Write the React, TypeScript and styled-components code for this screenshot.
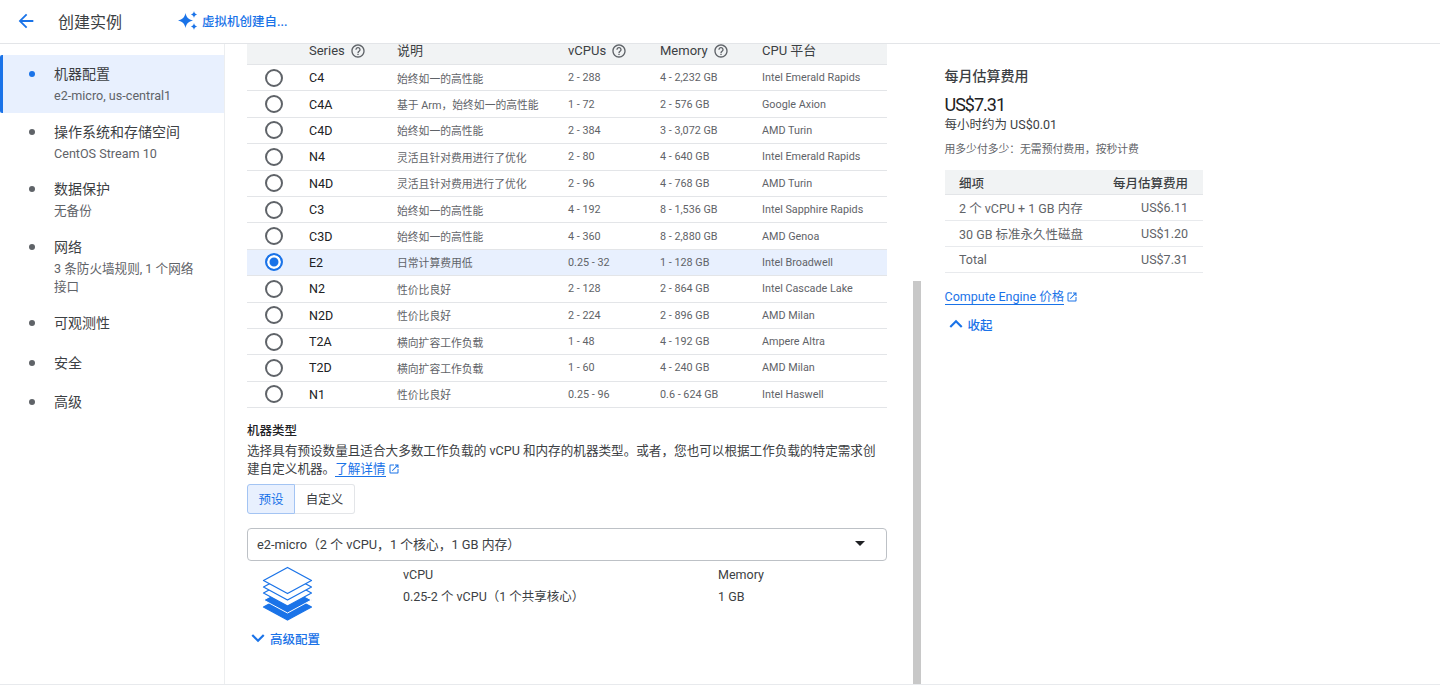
import styled, { createGlobalStyle } from "styled-components";
import {
  MdArrowBack,
  MdHelpOutline,
  MdOpenInNew,
  MdKeyboardArrowDown,
  MdKeyboardArrowUp,
  MdArrowDropDown,
} from "react-icons/md";

const FONT = `Roboto, "Noto Sans CJK SC", sans-serif`;

const SERIES = [
  { name: "C4", desc: "始终如一的高性能", cpu: "2 - 288", mem: "4 - 2,232 GB", platform: "Intel Emerald Rapids" },
  { name: "C4A", desc: "基于 Arm，始终如一的高性能", cpu: "1 - 72", mem: "2 - 576 GB", platform: "Google Axion" },
  { name: "C4D", desc: "始终如一的高性能", cpu: "2 - 384", mem: "3 - 3,072 GB", platform: "AMD Turin" },
  { name: "N4", desc: "灵活且针对费用进行了优化", cpu: "2 - 80", mem: "4 - 640 GB", platform: "Intel Emerald Rapids" },
  { name: "N4D", desc: "灵活且针对费用进行了优化", cpu: "2 - 96", mem: "4 - 768 GB", platform: "AMD Turin" },
  { name: "C3", desc: "始终如一的高性能", cpu: "4 - 192", mem: "8 - 1,536 GB", platform: "Intel Sapphire Rapids" },
  { name: "C3D", desc: "始终如一的高性能", cpu: "4 - 360", mem: "8 - 2,880 GB", platform: "AMD Genoa" },
  { name: "E2", desc: "日常计算费用低", cpu: "0.25 - 32", mem: "1 - 128 GB", platform: "Intel Broadwell", selected: true },
  { name: "N2", desc: "性价比良好", cpu: "2 - 128", mem: "2 - 864 GB", platform: "Intel Cascade Lake" },
  { name: "N2D", desc: "性价比良好", cpu: "2 - 224", mem: "2 - 896 GB", platform: "AMD Milan" },
  { name: "T2A", desc: "横向扩容工作负载", cpu: "1 - 48", mem: "4 - 192 GB", platform: "Ampere Altra" },
  { name: "T2D", desc: "横向扩容工作负载", cpu: "1 - 60", mem: "4 - 240 GB", platform: "AMD Milan" },
  { name: "N1", desc: "性价比良好", cpu: "0.25 - 96", mem: "0.6 - 624 GB", platform: "Intel Haswell" },
];

const NAV = [
  { title: "机器配置", sub: ["e2-micro, us-central1"], active: true },
  { title: "操作系统和存储空间", sub: ["CentOS Stream 10"] },
  { title: "数据保护", sub: ["无备份"] },
  { title: "网络", sub: ["3 条防火墙规则, 1 个网络", "接口"] },
  { title: "可观测性", sub: [] },
  { title: "安全", sub: [] },
  { title: "高级", sub: [] },
];

const COSTS = [
  { label: "2 个 vCPU + 1 GB 内存", value: "US$6.11" },
  { label: "30 GB 标准永久性磁盘", value: "US$1.20" },
  { label: "Total", value: "US$7.31" },
];

const Sparkle = () => (
  <svg width="21" height="21" viewBox="0 0 21 21" fill="#1a73e8">
    <path d="M7.500 3 C8.300 7 10.500 9.700 15 10.500 C10.500 11.300 8.300 14 7.500 18 C6.700 14 4.500 11.300 0 10.500 C4.500 9.700 6.700 7 7.500 3Z" />
    <path d="M16 1 C16.300 3 17.200 4 19.200 4.500 C17.200 5 16.300 6 16 8 C15.700 6 14.800 5 12.800 4.500 C14.800 4 15.700 3 16 1Z" />
    <path d="M16 13 C16.300 15 17.200 16 19.200 16.500 C17.200 17 16.300 18 16 20 C15.700 18 14.800 17 12.800 16.500 C14.800 16 15.700 15 16 13Z" />
  </svg>
);

const StackIcon = () => (
  <svg width="52" height="56" viewBox="0 0 52 56" strokeLinejoin="round">
    <path d="M25.500 28 L49.500 41 L25.500 54 L1.500 41Z" fill="#1a73e8" stroke="#1a73e8" strokeWidth="1.300" />
    <path d="M25.500 21 L49.500 34 L25.500 47 L1.500 34Z" fill="#1a73e8" stroke="#fff" strokeWidth="1" />
    <path d="M25.500 14 L49.500 27 L25.500 40 L1.500 27Z" fill="#fff" stroke="#1a73e8" strokeWidth="1.300" />
    <path d="M25.500 8 L49.500 21 L25.500 34 L1.500 21Z" fill="#fff" stroke="#1a73e8" strokeWidth="1.300" />
    <path d="M25.500 1.500 L49.500 14.500 L25.500 27.500 L1.500 14.500Z" fill="#fff" stroke="#1a73e8" strokeWidth="1.300" />
  </svg>
);

const App = () => {
  return (
    <>
      <GlobalStyle />
      <Page>
        <Header>
          <BackButton>
            <MdArrowBack size={22} />
          </BackButton>
          <PageTitle>创建实例</PageTitle>
          <AssistButton>
            <Sparkle />
            <span>虚拟机创建自...</span>
          </AssistButton>
        </Header>
        <Body>
          <Sidebar>
            {NAV.map((item) => (
              <NavItem key={item.title} $active={item.active} $plain={item.sub.length === 0}>
                <NavDot $active={item.active} />
                <NavText>
                  <NavTitle>{item.title}</NavTitle>
                  {item.sub.map((line) => (
                    <NavSub key={line}>{line}</NavSub>
                  ))}
                </NavText>
              </NavItem>
            ))}
          </Sidebar>
          <Main>
            <Content>
              <TableHead>
                <span />
                <HeadCell>Series <MdHelpOutline size={16} /></HeadCell>
                <HeadCell>说明</HeadCell>
                <HeadCell>vCPUs <MdHelpOutline size={16} /></HeadCell>
                <HeadCell>Memory <MdHelpOutline size={16} /></HeadCell>
                <HeadCell>CPU 平台</HeadCell>
              </TableHead>
              {SERIES.map((row) => (
                <TableRow key={row.name} $selected={row.selected}>
                  <Radio $checked={row.selected} />
                  <SeriesName>{row.name}</SeriesName>
                  <Cell>{row.desc}</Cell>
                  <Cell>{row.cpu}</Cell>
                  <Cell>{row.mem}</Cell>
                  <Cell>{row.platform}</Cell>
                </TableRow>
              ))}
              <SectionTitle>机器类型</SectionTitle>
              <Description>
                选择具有预设数量且适合大多数工作负载的 vCPU 和内存的机器类型。或者，您也可以根据工作负载的特定需求创建自定义机器。
                <Link>了解详情</Link>
                <OutIcon><MdOpenInNew size={12} /></OutIcon>
              </Description>
              <Toggle>
                <ToggleButton $on>预设</ToggleButton>
                <ToggleButton>自定义</ToggleButton>
              </Toggle>
              <Select>
                <span>e2-micro（2 个 vCPU，1 个核心，1 GB 内存）</span>
                <MdArrowDropDown size={24} color="#202124" />
              </Select>
              <Specs>
                <SpecIcon><StackIcon /></SpecIcon>
                <SpecColumn $width={315}>
                  <SpecLabel>vCPU</SpecLabel>
                  <SpecValue>0.25-2 个 vCPU（1 个共享核心）</SpecValue>
                </SpecColumn>
                <SpecColumn>
                  <SpecLabel>Memory</SpecLabel>
                  <SpecValue>1 GB</SpecValue>
                </SpecColumn>
              </Specs>
              <AdvancedToggle>
                <MdKeyboardArrowDown size={26} />
                高级配置
              </AdvancedToggle>
            </Content>
            <ScrollTrack>
              <ScrollThumb />
            </ScrollTrack>
          </Main>
          <Aside>
            <AsideTitle>每月估算费用</AsideTitle>
            <Price>US$7.31</Price>
            <Hourly>每小时约为 US$0.01</Hourly>
            <Note>用多少付多少：无需预付费用，按秒计费</Note>
            <CostHead>
              <span>细项</span>
              <span>每月估算费用</span>
            </CostHead>
            {COSTS.map((cost) => (
              <CostRow key={cost.label}>
                <span>{cost.label}</span>
                <span>{cost.value}</span>
              </CostRow>
            ))}
            <PriceLinkRow>
              <Link>Compute Engine 价格</Link>
              <OutIcon><MdOpenInNew size={12} /></OutIcon>
            </PriceLinkRow>
            <CollapseToggle>
              <MdKeyboardArrowUp size={26} />
              收起
            </CollapseToggle>
          </Aside>
        </Body>
      </Page>
    </>
  );
};

export default App;

const GlobalStyle = createGlobalStyle`
  html, body {
    margin: 0;
    padding: 0;
    background: #fff;
    overflow: hidden;
  }
  * {
    box-sizing: border-box;
  }
  body {
    font-family: ${FONT};
    color: #202124;
  }
`;

const Page = styled.div`
  width: 1440px;
  height: 685px;
  display: flex;
  flex-direction: column;
  border-bottom: 1px solid #e8eaed;
`;

const Header = styled.header`
  height: 44px;
  flex: none;
  display: flex;
  align-items: center;
  padding: 0 0 2px 15px;
  border-bottom: 1px solid #e3e5e8;
`;

const BackButton = styled.div`
  display: flex;
  color: #1a73e8;
  width: 43px;
`;

const PageTitle = styled.h1`
  margin: 0;
  width: 120px;
  font-size: 16px;
  font-weight: 400;
  color: #3c4043;
`;

const AssistButton = styled.div`
  display: flex;
  align-items: center;
  gap: 3px;
  font-size: 12.5px;
  font-weight: 500;
  color: #1a73e8;
`;

const Body = styled.div`
  flex: 1;
  min-height: 0;
  display: flex;
`;

const Sidebar = styled.nav`
  width: 225px;
  flex: none;
  padding-top: 11px;
  border-right: 1px solid #eceef0;
`;

const NavItem = styled.div<{ $active?: boolean; $plain?: boolean }>`
  display: flex;
  padding: ${(p) => (p.$plain ? "10px 0 9.5px" : "9px 0 7.5px")};
  padding-left: ${(p) => (p.$active ? "26px" : "29px")};
  background: ${(p) => (p.$active ? "#e8f0fe" : "transparent")};
  border-left: ${(p) => (p.$active ? "3px solid #1a73e8" : "none")};
  border-radius: 2px 0 0 2px;
`;

const NavDot = styled.span<{ $active?: boolean }>`
  width: 6px;
  height: 6px;
  margin-top: 7px;
  flex: none;
  border-radius: 50%;
  background: ${(p) => (p.$active ? "#1a73e8" : "#5f6368")};
`;

const NavText = styled.div`
  margin-left: 19px;
  width: 148px;
`;

const NavTitle = styled.div`
  font-size: 14px;
  line-height: 20px;
  color: #3c4043;
  white-space: nowrap;
`;

const NavSub = styled.div`
  font-size: 12.600px;
  line-height: 18px;
  color: #5f6368;
  white-space: nowrap;
  &:nth-child(2) {
    margin-top: 3px;
  }
`;

const Main = styled.main`
  width: 696px;
  flex: none;
  display: flex;
  justify-content: space-between;
  padding-left: 22px;
`;

const Content = styled.div`
  width: 640px;
`;

const COLUMNS = "62px 88px 171px 92px 102px 1fr";

const TableHead = styled.div`
  height: 21px;
  display: grid;
  grid-template-columns: ${COLUMNS};
  align-content: start;
  background: #f1f3f4;
  border-bottom: 1px solid #e3e5e8;
`;

const HeadCell = styled.div`
  display: flex;
  align-items: center;
  gap: 5px;
  height: 14px;
  font-size: 13px;
  line-height: 14px;
  color: #3c4043;
  svg {
    color: #5f6368;
  }
`;

const TableRow = styled.div<{ $selected?: boolean }>`
  height: 26.400px;
  display: grid;
  grid-template-columns: ${COLUMNS};
  align-items: center;
  background: ${(p) => (p.$selected ? "#e8f0fe" : "#fff")};
  border-bottom: 1px solid #e3e5e8;
`;

const Radio = styled.span<{ $checked?: boolean }>`
  width: 18px;
  height: 18px;
  margin-left: 18px;
  border-radius: 50%;
  border: 2px solid ${(p) => (p.$checked ? "#1a73e8" : "#5f6368")};
  background: ${(p) => (p.$checked ? "#1a73e8" : "#fff")};
  box-shadow: ${(p) => (p.$checked ? "inset 0 0 0 2.500px #fff" : "none")};
`;

const SeriesName = styled.div`
  font-size: 12.500px;
  color: #202124;
`;

const Cell = styled.div`
  font-size: 10.800px;
  color: #5f6368;
  white-space: nowrap;
`;

const SectionTitle = styled.div`
  margin-top: 13.500px;
  font-size: 12.500px;
  line-height: 18px;
  font-weight: 500;
  color: #202124;
`;

const Description = styled.div`
  margin-top: 2px;
  font-size: 12.600px;
  line-height: 18px;
  color: #3c4043;
`;

const Link = styled.span`
  color: #1a73e8;
  border-bottom: 1px solid #1a73e8;
`;

const OutIcon = styled.span`
  display: inline-flex;
  margin-left: 2px;
  vertical-align: -2px;
  color: #1a73e8;
`;

const Toggle = styled.div`
  margin-top: 6px;
  display: flex;
`;

const ToggleButton = styled.div<{ $on?: boolean }>`
  height: 30px;
  width: ${(p) => (p.$on ? "48px" : "60px")};
  display: flex;
  align-items: center;
  justify-content: center;
  font-size: 12.500px;
  color: ${(p) => (p.$on ? "#1a73e8" : "#3c4043")};
  background: ${(p) => (p.$on ? "#e8f0fe" : "#fff")};
  border: 1px solid ${(p) => (p.$on ? "#a3c4f3" : "#e3e5e8")};
  border-radius: ${(p) => (p.$on ? "3px 0 0 3px" : "0 3px 3px 0")};
  ${(p) => !p.$on && "border-left: none;"}
`;

const Select = styled.div`
  height: 32.500px;
  margin-top: 14.500px;
  padding: 0 14px 2px 9px;
  display: flex;
  align-items: center;
  justify-content: space-between;
  font-size: 12.800px;
  color: #3c4043;
  border: 1px solid #bdc1c6;
  border-radius: 4px;
`;

const Specs = styled.div`
  display: flex;
  margin-top: 5px;
  height: 56px;
`;

const SpecIcon = styled.div`
  width: 156px;
  padding-left: 15px;
`;

const SpecColumn = styled.div<{ $width?: number }>`
  width: ${(p) => (p.$width ? `${p.$width}px` : "auto")};
`;

const SpecLabel = styled.div`
  font-size: 12.500px;
  line-height: 18px;
  color: #3c4043;
`;

const SpecValue = styled.div`
  margin-top: 4px;
  font-size: 12.500px;
  line-height: 18px;
  color: #3c4043;
`;

const AdvancedToggle = styled.div`
  display: flex;
  align-items: center;
  margin-top: 3.500px;
  font-size: 12.500px;
  font-weight: 500;
  color: #1a73e8;
  svg {
    margin: 0 -1px 0 -2px;
  }
`;

const ScrollTrack = styled.div`
  width: 8px;
  display: flex;
  flex-direction: column;
  justify-content: flex-end;
`;

const ScrollThumb = styled.div`
  height: 403px;
  background: #c8c8c8;
`;

const Aside = styled.aside`
  width: 282px;
  padding: 23px 0 0 23.500px;
`;

const AsideTitle = styled.div`
  font-size: 14px;
  line-height: 18px;
  font-weight: 500;
  color: #3c4043;
`;

const Price = styled.div`
  margin-top: 9px;
  font-size: 18px;
  line-height: 22px;
  letter-spacing: -1px;
  color: #202124;
`;

const Hourly = styled.div`
  font-size: 12.500px;
  line-height: 18px;
  color: #3c4043;
`;

const Note = styled.div`
  margin-top: 7px;
  font-size: 10.800px;
  line-height: 18px;
  color: #5f6368;
`;

const CostHead = styled.div`
  margin-top: 11px;
  height: 25px;
  padding: 0 15px 0 14.500px;
  display: flex;
  align-items: center;
  justify-content: space-between;
  font-size: 12.500px;
  font-weight: 500;
  color: #3c4043;
  background: #f1f3f4;
  border-bottom: 1px solid #e3e5e8;
`;

const CostRow = styled.div`
  height: 26px;
  padding: 0 15px 0 14.500px;
  display: flex;
  align-items: center;
  justify-content: space-between;
  font-size: 12.500px;
  color: #5f6368;
  border-bottom: 1px solid #e8eaed;
`;

const PriceLinkRow = styled.div`
  margin-top: 15px;
  font-size: 12.500px;
  line-height: 18px;
`;

const CollapseToggle = styled.div`
  display: flex;
  align-items: center;
  margin-top: 5px;
  font-size: 12.500px;
  font-weight: 500;
  color: #1a73e8;
  svg {
    margin: 0 -1px 0 -2px;
  }
`;
